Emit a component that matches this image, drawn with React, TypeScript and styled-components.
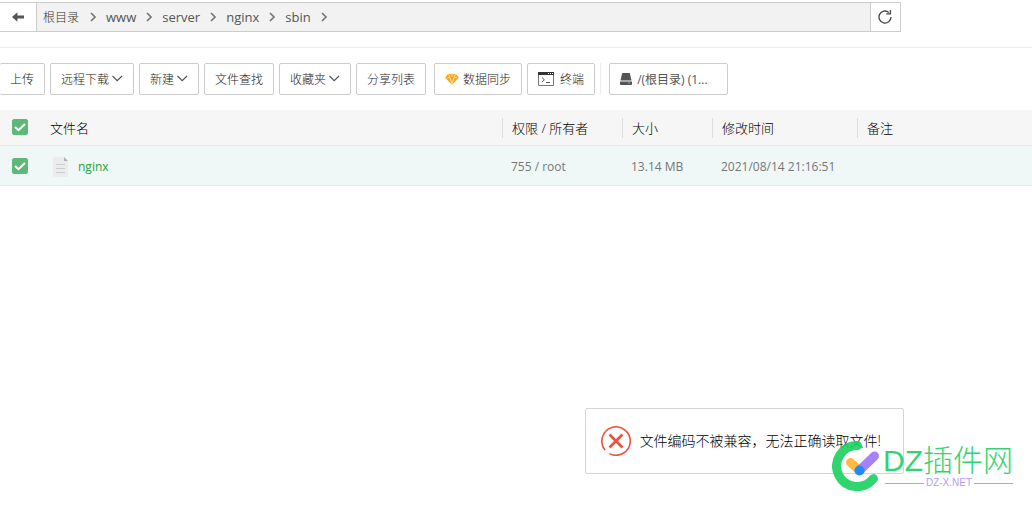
import React from "react";
import styled, { createGlobalStyle } from "styled-components";

const GlobalStyle = createGlobalStyle`
  *, *::before, *::after { box-sizing: border-box; }
  body {
    margin: 0;
    background: #fff;
    color: #555;
    font-family: "Open Sans", "Noto Sans CJK SC", sans-serif;
    font-size: 12px;
    line-height: 20px;
  }
  button { font: inherit; color: inherit; cursor: pointer; }
`;

const Page = styled.div`
  position: relative;
  min-height: 100vh;
  padding-top: 2px;
  overflow: hidden;
`;

const PathBar = styled.nav`
  display: flex;
  height: 30px;
  margin-right: 131px;
  border: 1px solid #ccc;
  border-left: 0;
`;

const PathButton = styled.button<{ $side: "left" | "right" }>`
  display: flex;
  align-items: center;
  justify-content: center;
  width: ${(p) => (p.$side === "left" ? 37 : 30)}px;
  padding: 0 1px 0 0;
  border: 0;
  border-${(p) => (p.$side === "left" ? "right" : "left")}: 1px solid #ccc;
  background: #fff;
`;

const Crumbs = styled.ol`
  display: flex;
  flex: 1;
  align-items: center;
  margin: 0;
  padding: 0 0 0 6px;
  list-style: none;
  background: #f2f2f2;
`;

const Crumb = styled.li`
  display: flex;
  align-items: center;
  gap: 9px;
  margin-right: 9px;
`;

const CrumbLink = styled.a<{ $root?: boolean }>`
  padding-top: ${(p) => (p.$root ? 2 : 0)}px;
  padding-right: ${(p) => (p.$root ? 1 : 0)}px;
  color: ${(p) => (p.$root ? "#333" : "#555")};
  font-size: ${(p) => (p.$root ? 12 : 13)}px;
  font-weight: ${(p) => (p.$root ? 300 : 400)};
  text-decoration: none;
`;

const Toolbar = styled.div`
  display: flex;
  gap: 5px;
  margin-top: 15px;
  padding: 15px 0;
  border-top: 1px solid #eee;
`;

const ToolGroup = styled.div<{ $divided?: boolean }>`
  display: flex;
  gap: 5px;
  margin-left: ${(p) => (p.$divided ? 0 : 3)}px;
  padding-left: ${(p) => (p.$divided ? 8 : 0)}px;
  border-left: ${(p) => (p.$divided ? "1px solid #eee" : "0")};
`;

const ToolButton = styled.button<{ $gap?: number; $flush?: boolean; $wide?: boolean }>`
  display: flex;
  align-items: center;
  gap: ${(p) => p.$gap ?? 2}px;
  height: 32px;
  padding: 0 10px;
  ${(p) => p.$wide && "width: 119px;"}
  border: 1px solid #ccc;
  border-radius: 2px;
  ${(p) => p.$flush && "border-left: 0;"}
  background: #fff;
  color: ${(p) => (p.$wide ? "#555" : "#222")};
  font-weight: ${(p) => (p.$wide ? 400 : 300)};
  white-space: nowrap;
`;

const ToolText = styled.span`
  padding-top: 2px;
`;

const FileTable = styled.table`
  width: 100%;
  table-layout: fixed;
  border-collapse: separate;
  border-spacing: 0;
  text-align: left;
`;

const Col = styled.col<{ $width?: number }>`
  ${(p) => p.$width && `width: ${p.$width}px;`}
`;

const HeadCell = styled.th<{ $check?: boolean }>`
  height: 36px;
  padding: 0 0 ${(p) => (p.$check ? 2 : 0)}px ${(p) => (p.$check ? 12 : 0)}px;
  border-bottom: 1px solid #e6eaea;
  background: #f6f6f6;
  color: #000;
  font-size: 13px;
  font-weight: 300;
`;

const HeadLabel = styled.div<{ $line?: boolean }>`
  padding-left: 9px;
  border-left: 1px solid ${(p) => (p.$line ? "#ddd" : "transparent")};
`;

const Cell = styled.td<{ $check?: boolean }>`
  height: 40px;
  padding: ${(p) => (p.$check ? 0 : 2)}px 0 0 ${(p) => (p.$check ? 12 : 9)}px;
  border-bottom: 1px solid #e1eeeb;
  background: #f0f8f7;
  color: #777;
`;

const FileLink = styled.a`
  display: flex;
  align-items: center;
  gap: 10px;
  padding-left: 4px;
  color: #20a53a;
  font-size: 12px;
  text-decoration: none;
`;

const CheckBox = styled.label`
  display: grid;
  width: 16px;
  height: 16px;
  > * { grid-area: 1 / 1; }
  svg { pointer-events: none; }
`;

const CheckInput = styled.input`
  appearance: none;
  width: 16px;
  height: 16px;
  margin: 0;
  border: 1px solid #bbb;
  border-radius: 2px;
  background: #fff;
  &:checked { border-color: #5fb878; background: #5fb878; }
`;

const Message = styled.div`
  position: absolute;
  right: 128px;
  bottom: 32px;
  display: flex;
  align-items: center;
  gap: 9px;
  height: 66px;
  padding: 0 22px 0 15px;
  border: 1px solid #d3d4d3;
  border-radius: 2px;
  background: #fff;
  color: #000;
  font-size: 14px;
  font-weight: 300;
  white-space: nowrap;
`;

const Watermark = styled.div`
  position: absolute;
  right: 19px;
  bottom: 15px;
  display: flex;
  align-items: center;
  gap: 3px;
  opacity: 0.9;
  pointer-events: none;
`;

const Brand = styled.div`
  display: flex;
  flex-direction: column;
  font-family: "Liberation Sans", "Noto Sans CJK SC", sans-serif;
`;

const BrandName = styled.span`
  color: #1bd161;
  font-size: 30px;
  font-weight: 300;
  line-height: 34px;
  white-space: nowrap;
`;

const BrandSite = styled.span`
  display: flex;
  align-items: center;
  gap: 2px;
  padding-left: 2px;
  color: #ae91fb;
  font-size: 10px;
  line-height: 10px;
  &::before, &::after { content: ""; flex: 1; height: 1px; background: #ae91fb; }
`;

const CrumbArrow = () => (
  <svg width="8" height="10" viewBox="0 0 8 10" fill="none" stroke="#777" strokeWidth="1.7" aria-hidden="true">
    <path d="M2 1l4 4-4 4" />
  </svg>
);

const Chevron = () => (
  <svg width="12" height="8" viewBox="0 0 12 8" fill="none" stroke="#555" strokeWidth="1.2" aria-hidden="true">
    <path d="M1.5 1l4.7 4.7L11 1" />
  </svg>
);

const BackArrow = () => (
  <svg width="12" height="10" viewBox="0 0 12 10" fill="#555" aria-hidden="true">
    <path d="M0 5L5.4 0.2V3.5H12V6.5H5.4V9.8z" />
  </svg>
);

const Refresh = () => (
  <svg width="14" height="14" viewBox="0 0 14 14" fill="none" stroke="#444" strokeWidth="1.3" aria-hidden="true">
    <path d="M13 7A6 6 0 1 1 10.8 2.4" />
    <path d="M12.4 0V3.8H8.3" />
  </svg>
);

const Diamond = () => (
  <svg width="14" height="12" viewBox="0 0 14 12" aria-hidden="true">
    <path d="M3 1h8l2.8 3.6L7 12 .2 4.6z" fill="#ffa21a" />
    <path d="M3.6 1.4L5 4.6 7 10.8l2-6.2 1.4-3.2M7 1.4v2.4M2.4 4.6h2.4M9.2 4.6h2.4" fill="none" stroke="#fff0d0" strokeWidth=".9" />
  </svg>
);

const Terminal = () => (
  <svg width="16" height="14" viewBox="0 0 16 14" fill="none" aria-hidden="true">
    <path d="M.5 1.5h15v12H.5z" fill="#fff" stroke="#777" />
    <path d="M0 0h16v3H0z" fill="#333" />
    <path d="M10 1.5h1M12 1.5h1M14 1.5h1" stroke="#fff" />
    <path d="M4 5.5L6.4 7.8 4 10M8 10.5h4" stroke="#555" />
  </svg>
);

const Disk = () => (
  <svg width="12" height="12" viewBox="0 0 12 12" fill="#555" aria-hidden="true">
    <path d="M2.2 0h7.6l1.7 7.6H.5zM0 8.5h12V11q0 1-1 1H1q-1 0-1-1z" />
    <path d="M8 10h2" stroke="#999" />
  </svg>
);

const FileIcon = () => (
  <svg width="15" height="20" viewBox="0 0 15 20" fill="none" aria-hidden="true">
    <path d="M0 0h11l4 4v16H0z" fill="#ececec" />
    <path d="M11 0l4 4h-4z" fill="#b2b2b2" />
    <path d="M3 7.5h9M3 11.5h9M3 15.5h9" stroke="#ccc" />
  </svg>
);

const ErrorIcon = () => (
  <svg width="30" height="30" viewBox="0 0 30 30" fill="none" stroke="#ea5341" aria-hidden="true">
    <path d="M4.2 24.2A14.2 14.2 0 1 1 8.4 27.6" strokeWidth="1.6" />
    <path d="M8.5 8.5l13 13M21.5 8.5l-13 13" strokeWidth="2.8" />
  </svg>
);

const Logo = () => (
  <svg width="48" height="50" viewBox="0 0 48 50" fill="none" strokeLinecap="round" aria-hidden="true">
    <path d="M25.5 4.6A20.5 20.5 0 1 0 41.4 37.6" stroke="#1bd161" strokeWidth="9" />
    <path d="M18.5 21.5L27 29" stroke="#ffb32e" strokeWidth="9" />
    <path d="M42.5 15L27.5 29.5" stroke="#9c75fd" strokeWidth="9" />
    <circle cx="27.5" cy="29.5" r="5" fill="#0b7dff" />
  </svg>
);

const Check = ({ label }: { label: string }) => (
  <CheckBox>
    <CheckInput type="checkbox" defaultChecked aria-label={label} />
    <svg width="16" height="16" viewBox="0 0 16 16" fill="none" stroke="#fff" strokeWidth="2" aria-hidden="true">
      <path d="M3 8l3.5 3.2L13 5" />
    </svg>
  </CheckBox>
);

const folders = ["根目录", "www", "server", "nginx", "sbin"];
const columns = ["权限 / 所有者", "大小", "修改时间", "备注"];
const tools = [
  { text: "上传", menu: false },
  { text: "远程下载", menu: true },
  { text: "新建", menu: true },
  { text: "文件查找", menu: false },
  { text: "收藏夹", menu: true },
  { text: "分享列表", menu: false },
];

export default function App() {
  return (
    <Page>
      <GlobalStyle />
      <PathBar aria-label="路径">
        <PathButton $side="left" aria-label="返回"><BackArrow /></PathButton>
        <Crumbs>
          {folders.map((name, i) => (
            <Crumb key={name}>
              <CrumbLink href="#" $root={i === 0}>{name}</CrumbLink>
              <CrumbArrow />
            </Crumb>
          ))}
        </Crumbs>
        <PathButton $side="right" aria-label="刷新"><Refresh /></PathButton>
      </PathBar>

      <Toolbar>
        {tools.map((tool, i) => (
          <ToolButton key={tool.text} $flush={i === 0}>
            <ToolText>{tool.text}</ToolText>
            {tool.menu && <Chevron />}
          </ToolButton>
        ))}
        <ToolGroup>
          <ToolButton $gap={4}><Diamond /><ToolText>数据同步</ToolText></ToolButton>
          <ToolButton $gap={6}><Terminal /><ToolText>终端</ToolText></ToolButton>
        </ToolGroup>
        <ToolGroup $divided>
          <ToolButton $gap={5} $wide><Disk /><ToolText>/(根目录) (1...</ToolText></ToolButton>
        </ToolGroup>
      </Toolbar>

      <FileTable>
        <colgroup>
          <Col $width={40} />
          <Col />
          <Col $width={120} />
          <Col $width={90} />
          <Col $width={145} />
          <Col $width={175} />
        </colgroup>
        <thead>
          <tr>
            <HeadCell $check><Check label="全选" /></HeadCell>
            <HeadCell><HeadLabel>文件名</HeadLabel></HeadCell>
            {columns.map((name) => (
              <HeadCell key={name}><HeadLabel $line>{name}</HeadLabel></HeadCell>
            ))}
          </tr>
        </thead>
        <tbody>
          <tr>
            <Cell $check><Check label="nginx" /></Cell>
            <Cell><FileLink href="#"><FileIcon />nginx</FileLink></Cell>
            <Cell>755 / root</Cell>
            <Cell>13.14 MB</Cell>
            <Cell>2021/08/14 21:16:51</Cell>
            <Cell />
          </tr>
        </tbody>
      </FileTable>

      <Message role="alert">
        <ErrorIcon />
        <span>文件编码不被兼容，无法正确读取文件!</span>
      </Message>

      <Watermark>
        <Logo />
        <Brand>
          <BrandName>DZ插件网</BrandName>
          <BrandSite>DZ-X.NET</BrandSite>
        </Brand>
      </Watermark>
    </Page>
  );
}
